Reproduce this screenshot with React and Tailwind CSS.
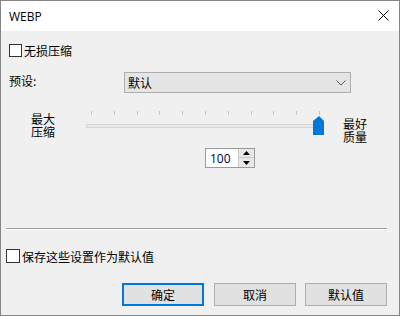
import React from "react";

const cjk = { fontFamily: '"Noto Sans CJK SC", "Noto Sans", sans-serif' };

function Check({ className = "" }) {
  return <div className={"w-[13px] h-[13px] border border-[#333333] bg-white shrink-0 " + className} />;
}

export default function App() {
  const ticks = [5, 28, 51, 73, 96, 119, 142, 165, 187, 210, 233];
  return (
    <div className="w-[400px] h-[316px] border border-[#858585] flex flex-col text-black text-[12px] leading-[13px]" style={cjk}>
      <div className="h-[30px] bg-white flex items-center justify-between pl-[8px] pr-[10px] shrink-0">
        <span className="text-[12px]" style={{ fontFamily: '"Open Sans", "Noto Sans", sans-serif' }}>WEBP</span>
        <svg width="11" height="11" viewBox="0 0 11 11" className="mt-[-1px]">
          <path d="M0.5 0.5 L10.5 10.5 M10.5 0.5 L0.5 10.5" stroke="#000" strokeWidth="1" />
        </svg>
      </div>
      <div className="flex-1 bg-[#f0f0f0] flex flex-col">
        <div className="flex items-center pl-[8px] mt-[13px] h-[13px]">
          <Check />
          <span className="ml-[2px]">无损压缩</span>
        </div>
        <div className="flex items-center pl-[8px] mt-[15px] h-[21px]">
          <span className="w-[115px] mt-[-4px]">预设:</span>
          <div className="w-[227px] h-[21px] border border-[#adadad] bg-[#e5e5e5] flex items-center justify-between pl-[3px] pr-[4px]">
            <span>默认</span>
            <svg width="10" height="6" viewBox="0 0 10 6">
              <path d="M0.5 0.5 L5 5 L9.5 0.5" stroke="#555" strokeWidth="1" fill="none" />
            </svg>
          </div>
        </div>
        <div className="flex items-start mt-[17px] h-[27px]">
          <div className="ml-[30px] w-[24px] mt-[2px] leading-[13px]">
            最大<br />压缩
          </div>
          <div className="relative ml-[31px] w-[240px] h-[26px]">
            {ticks.map((t) => (
              <div key={t} className="absolute top-[1px] w-px h-[4px] bg-[#c4c4c4]" style={{ left: t }} />
            ))}
            <div className="absolute left-0 top-[14px] w-[238px] h-[4px] border border-[#d6d6d6] bg-[#e7eaea]" />
            <svg className="absolute left-[227px] top-[6px]" width="12" height="20" viewBox="0 0 12 20">
              <path d="M6 0 L11 5 L11 19 L0 19 L0 5 Z" fill="#0078d7" />
            </svg>
          </div>
          <div className="ml-[17px] mt-[7px] w-[26px] leading-[13px]">
            最好<br />质量
          </div>
        </div>
        <div className="flex mt-[11px] ml-[204px] h-[20px]">
          <div className="w-[50px] h-[20px] border border-[#9a9a9a] bg-white flex items-center">
            <span className="pl-[4px] w-[32px] text-[#000040]" style={{ fontFamily: '"Open Sans", "Noto Sans", sans-serif' }}>100</span>
            <div className="w-[16px] h-[18px] flex flex-col border-l border-[#c9c9c9]">
              <div className="h-[9px] flex items-center justify-center bg-[#e8e8e8] border-b border-[#c9c9c9]">
                <svg width="7" height="4" viewBox="0 0 7 4"><path d="M3.5 0 L7 4 L0 4 Z" fill="#000" /></svg>
              </div>
              <div className="h-[9px] flex items-center justify-center bg-[#e8e8e8]">
                <svg width="7" height="4" viewBox="0 0 7 4"><path d="M0 0 L7 0 L3.5 4 Z" fill="#000" /></svg>
              </div>
            </div>
          </div>
        </div>
        <div className="mt-[60px] ml-[5px] w-[381px] h-[2px] border-t border-[#a0a0a0] border-b border-b-white" />
        <div className="flex items-center pl-[5px] mt-[19px] h-[14px]">
          <Check className="w-[14px] h-[14px]" />
          <span className="ml-[2px]">保存这些设置作为默认值</span>
        </div>
        <div className="flex mt-[20px] ml-[121px]">
          <div className="w-[82px] h-[23px] border-2 border-[#0078d7] bg-[#e1e1e1] flex items-center justify-center">确定</div>
          <div className="ml-[10px] w-[82px] h-[23px] border border-[#adadad] bg-[#e1e1e1] flex items-center justify-center">取消</div>
          <div className="ml-[9px] w-[82px] h-[23px] border border-[#adadad] bg-[#e1e1e1] flex items-center justify-center">默认值</div>
        </div>
      </div>
    </div>
  );
}
